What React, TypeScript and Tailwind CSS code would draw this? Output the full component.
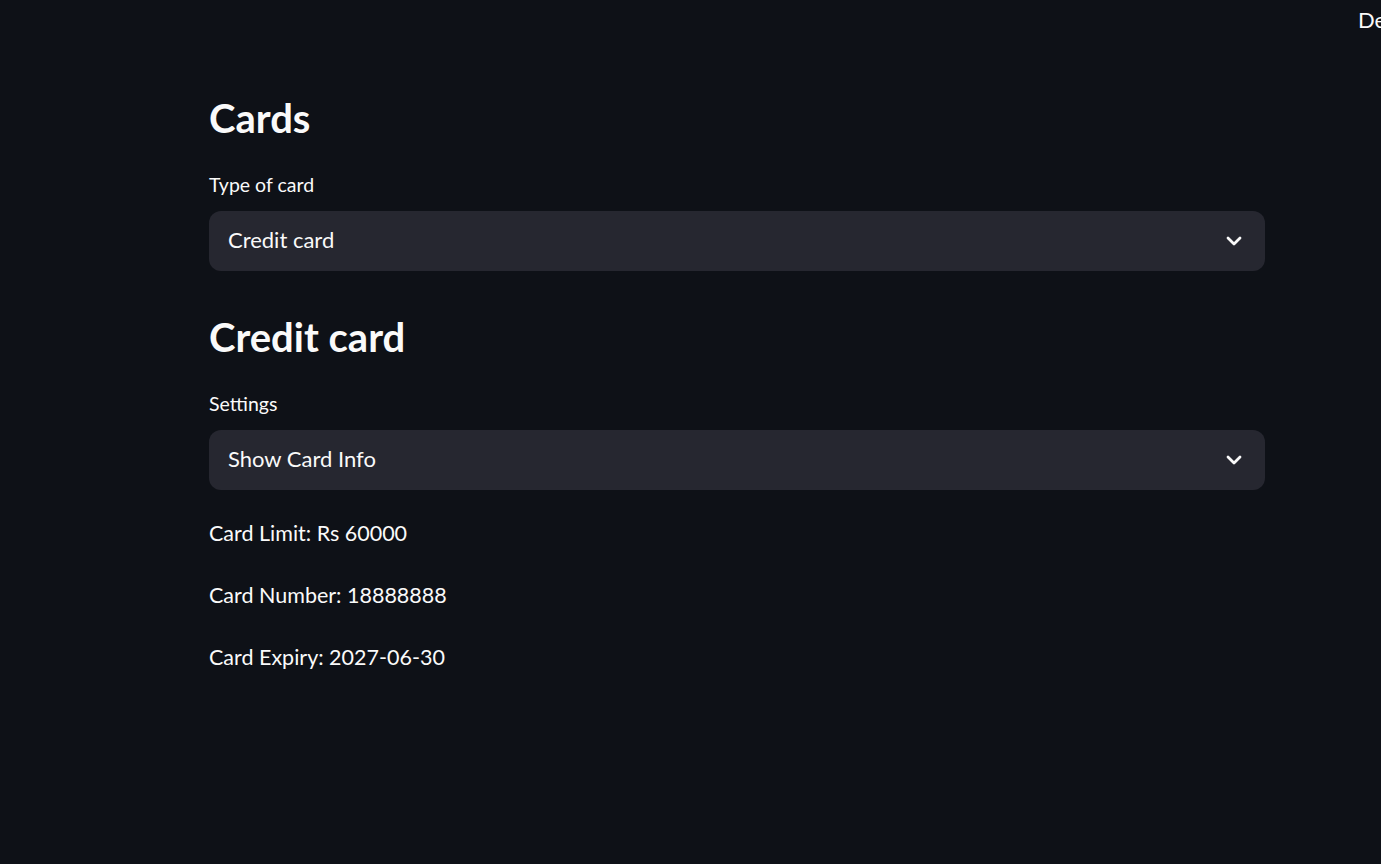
import React from "react";

function Chevron() {
  return (
    <svg width="16" height="10" viewBox="0 0 16 10" fill="none" className="shrink-0">
      <path d="M2 2 L8 8 L14 2" stroke="#fafafa" strokeWidth="2.8" strokeLinecap="round" strokeLinejoin="round" />
    </svg>
  );
}

function Select({ value }: { value: string }) {
  return (
    <div className="h-[60px] w-full rounded-[12px] bg-[#262730] flex items-center justify-between pl-[19px] pr-[23px]">
      <span className="text-[22px] leading-[30px] text-[#fafafa] -mt-[2px]">{value}</span>
      <Chevron />
    </div>
  );
}

export default function App() {
  return (
    <div className="min-h-screen w-full bg-[#0e1117] text-[#fafafa] overflow-hidden font-['Lato',sans-serif]">
      {/* header, the deploy button is cut off on the right */}
      <header className="h-[40px] pt-[5px] pl-[1358px] whitespace-nowrap">
        <span className="text-[22px] leading-[30px]">Deploy</span>
      </header>

      <main className="ml-[209px] w-[1056px] flex flex-col">
        <h2 className="mt-[53px] text-[40px] leading-[50px] font-bold">Cards</h2>
        <label className="mt-[30px] text-[19.5px] leading-[24px]">Type of card</label>
        <div className="mt-[14px]">
          <Select value="Credit card" />
        </div>

        <h2 className="mt-[41px] text-[40px] leading-[50px] font-bold">Credit card</h2>
        <label className="mt-[30px] text-[19.5px] leading-[24px]">Settings</label>
        <div className="mt-[14px]">
          <Select value="Show Card Info" />
        </div>

        <p className="mt-[28px] text-[21.5px] leading-[30px]">Card Limit: Rs 60000</p>
        <p className="mt-[32px] text-[21.5px] leading-[30px]">Card Number: 18888888</p>
        <p className="mt-[32px] text-[21.5px] leading-[30px]">Card Expiry: 2027-06-30</p>
      </main>
    </div>
  );
}
